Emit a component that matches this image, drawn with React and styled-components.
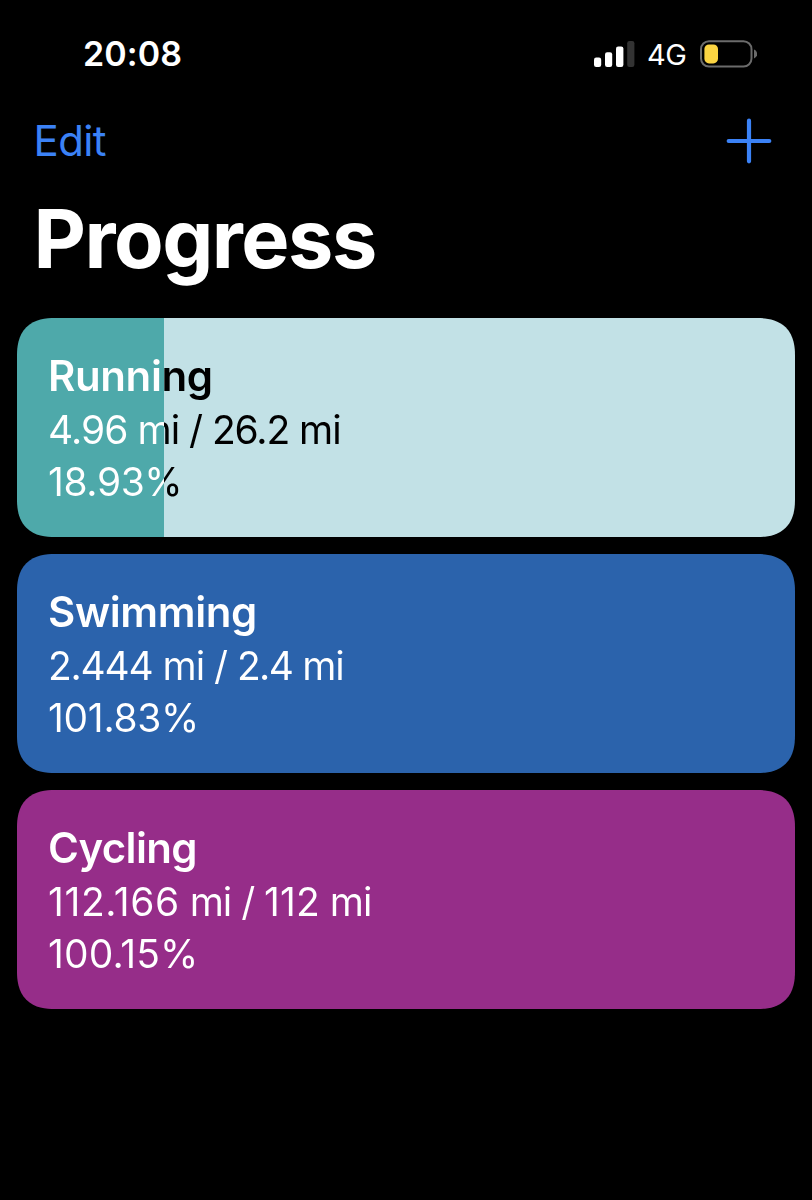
import React from "react";
import styled, { createGlobalStyle } from "styled-components";

const GlobalStyle = createGlobalStyle`
    * {
        box-sizing: border-box;
    }

    body {
        margin: 0;
        background-color: #000;
        font-family: Inter, sans-serif;
        color: #fff;
    }
`;

const Screen = styled.main`
    min-height: 1200px;
    padding: 36px 17px 0 17px;
    background-color: #000;
`;

const StatusBar = styled.header`
    display: flex;
    flex-direction: row;
    align-items: center;
    justify-content: space-between;
    height: 36px;
    padding: 0 38px 0 66px;
`;

const Time = styled.time`
    font-weight: 600;
    font-size: 34px;
    line-height: 36px;
    letter-spacing: 0.1px;
`;

const StatusIcons = styled.div`
    display: flex;
    align-items: center;
    height: 36px;
    gap: 12.5px;

    svg {
        display: block;
    }
`;

const Network = styled.span`
    width: 40.5px;
    padding-top: 2px;
    font-size: 29px;
    line-height: 36px;
    letter-spacing: -0.4px;
    white-space: nowrap;
`;

const NavBar = styled.nav`
    display: flex;
    flex-direction: row;
    align-items: center;
    justify-content: space-between;
    height: 60px;
    margin-top: 38.5px;
    padding: 0 23px 0 16.5px;
`;

const NavButton = styled.button`
    display: block;
    padding: 0;
    border: none;
    background-color: transparent;
    color: #3b82f6;
    font-family: inherit;
    font-size: 42px;
    line-height: 60px;
    letter-spacing: -0.6px;
    cursor: pointer;

    svg {
        display: block;
    }
`;

const Title = styled.h1`
    margin: 18.5px 0 0 16.5px;
    font-weight: 700;
    font-size: 81px;
    line-height: 100px;
    letter-spacing: -1.5px;
`;

const CardList = styled.section`
    display: flex;
    flex-direction: column;
    gap: 17px;
    margin-top: 29.4px;
`;

const Card = styled.article`
    height: 219px;
    border-radius: 33px;
    overflow: hidden;
    background: linear-gradient(
        to right,
        ${({ $color }) => $color} ${({ $done }) => $done}%,
        ${({ $track }) => $track} ${({ $done }) => $done}%
    );

    @supports (corner-shape: superellipse(1.3)) {
        border-radius: 38px;
        corner-shape: superellipse(1.3);
    }
`;

// the text swaps colour exactly where the bar ends
const CardText = styled.div`
    height: 100%;
    padding: 31px 31px;
    background: linear-gradient(
        to right,
        #fff ${({ $done }) => $done}%,
        #000 ${({ $done }) => $done}%
    );
    background-clip: text;
    -webkit-background-clip: text;
    -webkit-text-fill-color: transparent;
`;

const Name = styled.h2`
    margin: 0 0 1.5px 0;
    font-weight: 600;
    font-size: 42px;
    line-height: 53.5px;
    letter-spacing: ${({ $tracking }) => $tracking}px;
`;

const Detail = styled.p`
    margin: 0;
    font-size: 39px;
    line-height: 52px;
    letter-spacing: -1px;
    word-spacing: -0.1px;
`;

const Amount = styled.span`
    letter-spacing: ${({ $tracking }) => $tracking}px;
`;

const goals = [
    { name: "Running", distance: "4.96", target: "26.2", percent: 18.93, color: "#4ea9aa", track: "#c2e1e6", tracking: [-0.4, -0.9, -1.1, -0.4] },
    { name: "Swimming", distance: "2.444", target: "2.4", percent: 101.83, color: "#2b63ac", track: "#b9cfea", tracking: [-0.4, -1.2, -1.6, -0.3] },
    { name: "Cycling", distance: "112.166", target: "112", percent: 100.15, color: "#962d89", track: "#e3c0df", tracking: [-0.65, 0.6, 0.1, 0.1] },
];

const Signal = () => (
    <svg width="41" height="28" viewBox="0 0 41 28">
        <rect x="0" y="17.5" width="7.2" height="9.5" rx="2.2" fill="#fff" />
        <rect x="11" y="12.2" width="7.2" height="14.8" rx="2.2" fill="#fff" />
        <rect x="22" y="6.4" width="7.4" height="20.6" rx="2.2" fill="#fff" />
        <rect x="33.2" y="1" width="7.2" height="26" rx="2.2" fill="#333" />
    </svg>
);

const Battery = () => (
    <svg width="57" height="28" viewBox="0 0 57 28">
        <rect x="1" y="1.2" width="50.5" height="25.4" rx="8" fill="none" stroke="#6b6b6b" strokeWidth="2" />
        <rect x="4.4" y="4.4" width="13.6" height="19" rx="4.6" fill="#fbd442" />
        <path d="M54 9.5c2 .8 3.2 2.5 3.2 4.5s-1.2 3.7-3.2 4.5z" fill="#6b6b6b" />
    </svg>
);

const Plus = () => (
    <svg width="46" height="46" viewBox="0 0 46 46" fill="none" stroke="#3b82f6" strokeWidth="4.2" strokeLinecap="round">
        <path d="M23 2.7v40.6M2.7 23h40.6" />
    </svg>
);

const GoalCard = ({ goal }) => {
    const done = Math.min(goal.percent, 100);
    const [nameTracking, distanceTracking, targetTracking, percentTracking] = goal.tracking;

    return (
        <Card $color={goal.color} $track={goal.track} $done={done}>
            <CardText $done={done}>
                <Name $tracking={nameTracking}>{goal.name}</Name>
                <Detail>
                    <Amount $tracking={distanceTracking}>{goal.distance}</Amount>
                    {" mi / "}
                    <Amount $tracking={targetTracking}>{goal.target}</Amount>
                    {" mi"}
                </Detail>
                <Detail>
                    <Amount $tracking={percentTracking}>{`${goal.percent}%`}</Amount>
                </Detail>
            </CardText>
        </Card>
    );
};

export default function App() {
    return (
        <>
            <GlobalStyle />
            <Screen>
                <StatusBar>
                    <Time>20:08</Time>
                    <StatusIcons>
                        <Signal />
                        <Network>4G</Network>
                        <Battery />
                    </StatusIcons>
                </StatusBar>
                <NavBar>
                    <NavButton>Edit</NavButton>
                    <NavButton aria-label="Add">
                        <Plus />
                    </NavButton>
                </NavBar>
                <Title>Progress</Title>
                <CardList>
                    {goals.map((goal) => (
                        <GoalCard key={goal.name} goal={goal} />
                    ))}
                </CardList>
            </Screen>
        </>
    );
}
